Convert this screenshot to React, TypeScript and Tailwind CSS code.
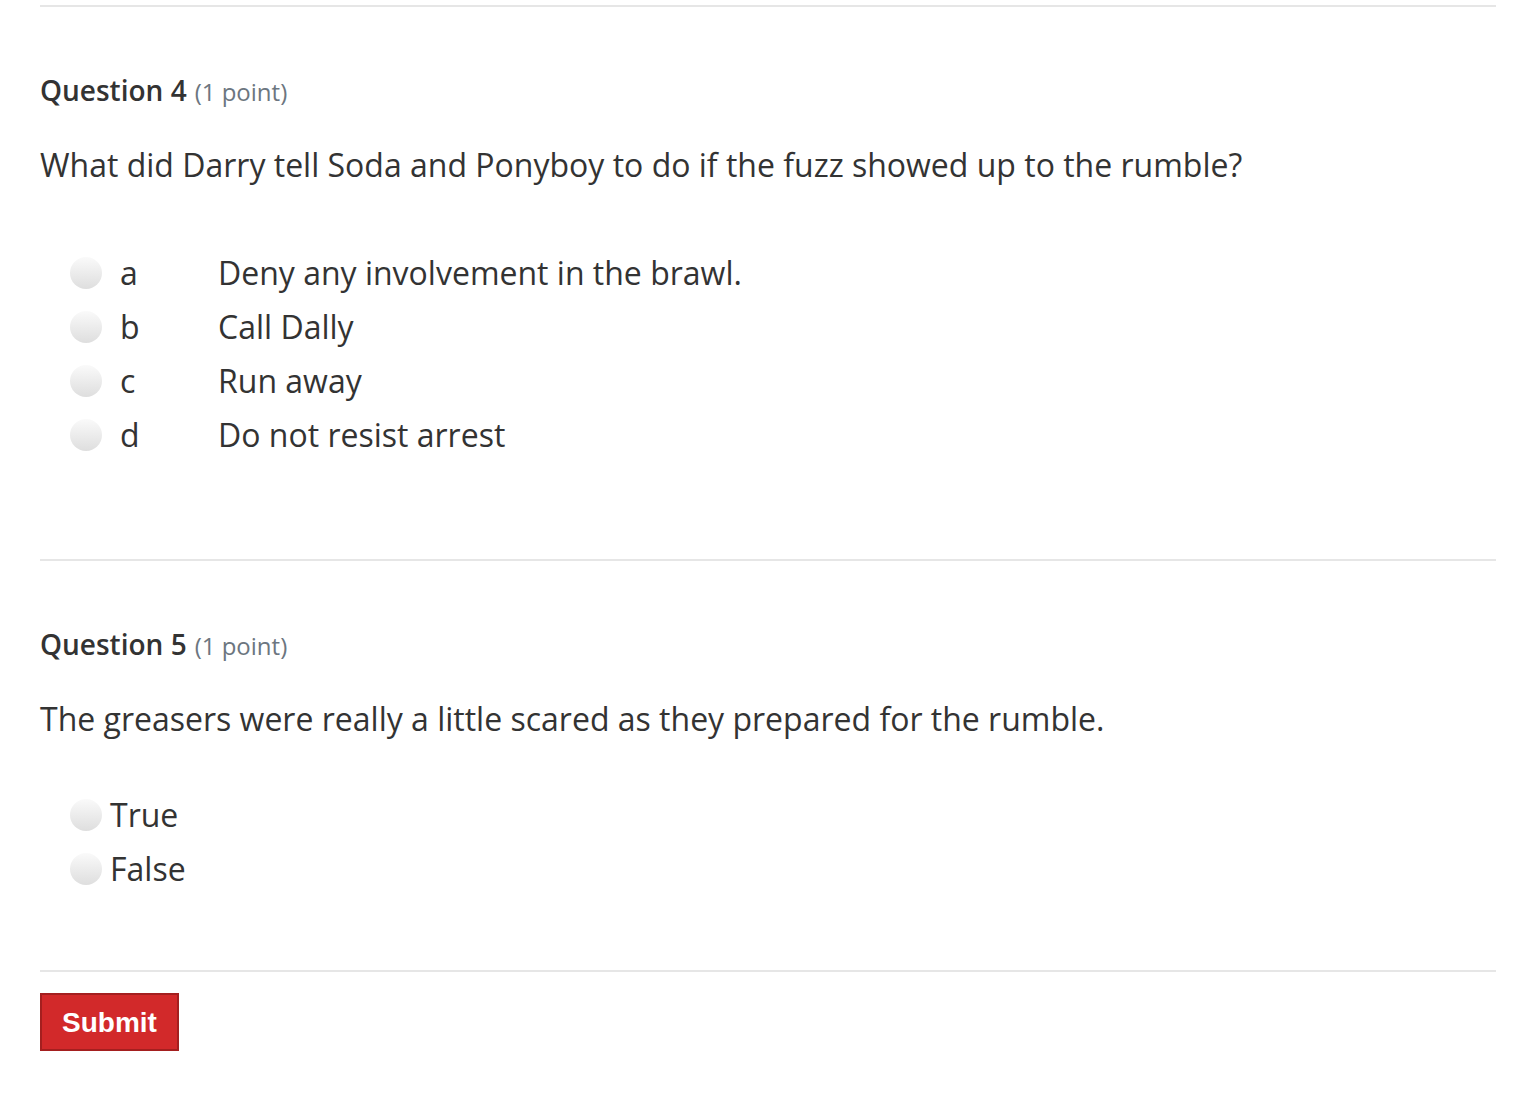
const font = { fontFamily: '"Open Sans", "Noto Sans", sans-serif' };

function Radio() {
  return (
    <span className="inline-block h-[32px] w-[32px] shrink-0 rounded-full bg-gradient-to-b from-[#fafafa] to-[#dedede]" />
  );
}

function Heading({ n }: { n: number }) {
  return (
    <div className="flex items-baseline gap-[8px] leading-none">
      <span className="text-[28px] font-semibold text-[#333333]">Question {n}</span>
      <span className="text-[24px] text-[#6c7680]">(1 point)</span>
    </div>
  );
}

const opts = [
  ['a', 'Deny any involvement in the brawl.'],
  ['b', 'Call Dally'],
  ['c', 'Run away'],
  ['d', 'Do not resist arrest'],
];

export default function App() {
  return (
    <div className="bg-white px-[40px] pt-[5px] text-[#333333]" style={font}>
      <div className="h-[2px] bg-[#e6e6e6]" />

      <div className="pt-[69px]">
        <Heading n={4} />
        <p className="mt-[39px] text-[32px] leading-[44px]">
          What did Darry tell Soda and Ponyboy to do if the fuzz showed up to the rumble?
        </p>
        <div className="mt-[59px] flex flex-col pl-[30px]">
          {opts.map(([l, t]) => (
            <div key={l} className="flex h-[54px] items-center">
              <Radio />
              <span className="w-[116px] pl-[18px] text-[32px]">{l}</span>
              <span className="text-[32px]">{t}</span>
            </div>
          ))}
        </div>
      </div>

      <div className="mt-[97px] h-[2px] bg-[#e6e6e6]" />

      <div className="pt-[69px]">
        <Heading n={5} />
        <p className="mt-[39px] text-[32px] leading-[44px]">
          The greasers were really a little scared as they prepared for the rumble.
        </p>
        <div className="mt-[47px] flex flex-col pl-[30px]">
          {['True', 'False'].map((t) => (
            <div key={t} className="flex h-[54px] items-center">
              <Radio />
              <span className="pl-[8px] text-[32px]">{t}</span>
            </div>
          ))}
        </div>
      </div>

      <div className="mt-[74px] h-[2px] bg-[#e6e6e6]" />

      <div className="pt-[21px] pb-[56px]">
        <button
          className="h-[58px] w-[139px] border-2 border-[#a41f1f] bg-[#d2292a] pt-[2px] text-[28px] font-bold text-white"
          style={{ fontFamily: '"Liberation Sans", Arial, sans-serif' }}
        >
          Submit
        </button>
      </div>
    </div>
  );
}
